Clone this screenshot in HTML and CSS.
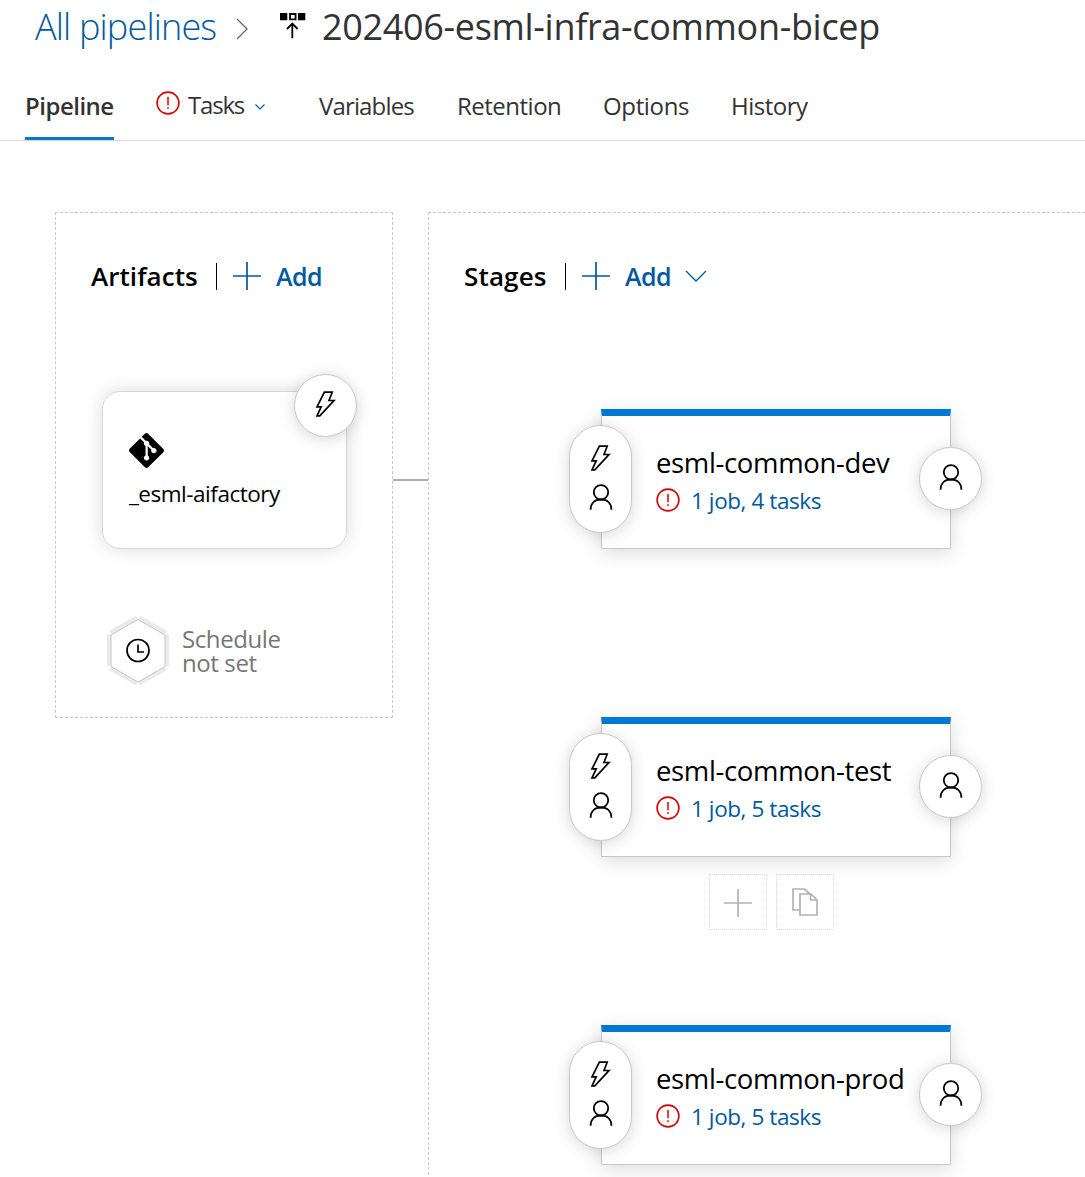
FILE: index.html
```html
<!DOCTYPE html>
<html lang="en">
<head>
<meta charset="utf-8">
<title>202406-esml-infra-common-bicep</title>
<link rel="stylesheet" href="styles.css">
</head>
<body>
<svg class="defs" width="0" height="0">
  <symbol id="alert" viewBox="0 0 24 24"><circle cx="12" cy="12" r="10.9" fill="none" stroke="currentColor" stroke-width="1.6"/><path d="M12 6v8.3M12 16.2v1.8" fill="none" stroke="currentColor" stroke-width="1.5"/></symbol>
  <symbol id="bolt" viewBox="0 0 21 26"><path d="M9.4 1.2H17.2L14 9.500H19L4.800 24.800H2L6.200 15.800H2Z" fill="none" stroke="currentColor" stroke-width="1.7"/></symbol>
  <symbol id="person" viewBox="0 0 24 26"><circle cx="12" cy="8.3" r="7.2" fill="none" stroke="currentColor" stroke-width="1.8"/><path d="M1.600 25.700C1.600 19 6 15.500 12 15.500S22.400 19 22.400 25.700" fill="none" stroke="currentColor" stroke-width="1.8"/></symbol>
  <symbol id="plus" viewBox="0 0 28 28"><path d="M14 0v28M0 14h28" fill="none" stroke="currentColor" stroke-width="1.7"/></symbol>
</svg>
<header class="header">
  <div class="crumbs">
    <a class="crumb-link">All pipelines</a>
    <svg class="crumb-arrow" viewBox="0 0 12 22"><path d="M1 1L11 11L1 21" fill="none" stroke="#666" stroke-width="1.3"/></svg>
    <svg class="release-icon" viewBox="0 0 26 26"><path d="M0 0H7.300V7.300H0ZM18 0H25.300V7.300H18Z"/><path d="M10 1H15.600V6.400H10ZM12.300 25.300V10.500M7 16L12.300 10.600L17.600 16" fill="none" stroke="#000" stroke-width="1.8"/></svg>
    <h1 class="title">202406-esml-infra-common-bicep</h1>
  </div>
  <nav class="tabs">
    <a class="tab tab-pipeline">Pipeline</a>
    <a class="tab tab-tasks"><svg class="alert"><use href="#alert"/></svg><span>Tasks</span><svg class="caret" viewBox="0 0 10 6"><path d="M.5 .5L5 5L9.500 .5" fill="none" stroke="#005a9e" stroke-width="1.1"/></svg></a>
    <a class="tab tab-variables">Variables</a>
    <a class="tab tab-retention">Retention</a>
    <a class="tab tab-options">Options</a>
    <a class="tab tab-history">History</a>
  </nav>
</header>
<main class="canvas">
  <section class="panel artifacts">
    <div class="panel-head">
      <h2 class="h-artifacts">Artifacts</h2><i class="sep"></i>
      <svg class="plus"><use href="#plus"/></svg><span class="add">Add</span>
    </div>
    <div class="artifact">
      <svg class="git" viewBox="0 0 24 24"><path d="M23.546 10.93L13.067.452c-.604-.603-1.582-.603-2.188 0L8.708 2.627l2.76 2.76c.645-.215 1.379-.07 1.889.441.516.515.658 1.258.438 1.9l2.658 2.66c.645-.223 1.387-.078 1.9.435.721.72.721 1.884 0 2.604-.719.719-1.881.719-2.6 0-.539-.541-.674-1.337-.404-1.996L12.86 8.955v6.525c.176.086.342.203.488.348.713.721.713 1.883 0 2.6-.719.721-1.889.721-2.609 0-.719-.719-.719-1.879 0-2.598.182-.18.387-.316.605-.406V8.835c-.217-.091-.424-.222-.6-.401-.545-.545-.676-1.342-.396-2.009L7.636 3.7.45 10.881c-.6.605-.6 1.584 0 2.189l10.48 10.477c.604.604 1.582.604 2.186 0l10.43-10.43c.605-.603.605-1.582 0-2.187"/></svg>
      <span class="artifact-name">_esml-aifactory</span>
      <div class="round trigger"><svg class="bolt"><use href="#bolt"/></svg></div>
    </div>
    <div class="schedule">
      <svg class="hex" viewBox="0 0 62 70">
        <path d="M2 18.500V50M60 18.500V50M3.300 16.500L29.700 1.500M32.300 1.500L58.700 16.500M3.300 52.500L29.700 67.500M32.300 67.500L58.700 52.500" stroke="#eaeaea" stroke-width="4"/>
        <path d="M31 3.500L58 19V50.500L31 66L4 50.500V19Z" fill="#fff" stroke="#c4c4c4"/>
        <circle cx="31" cy="34.500" r="11" fill="none" stroke="#000" stroke-width="1.700"/><path d="M31 28.500V36H37" fill="none" stroke="#000" stroke-width="1.700"/>
      </svg>
      <p class="schedule-text">Schedule<br>not set</p>
    </div>
  </section>
  <div class="connector"></div>
  <section class="panel stages">
    <div class="panel-head">
      <h2 class="h-stages">Stages</h2><i class="sep"></i>
      <svg class="plus"><use href="#plus"/></svg><span class="add">Add</span>
      <svg class="add-caret" viewBox="0 0 22 12"><path d="M1 1L11 11L21 1" fill="none" stroke="#005a9e" stroke-width="1.300"/></svg>
    </div>
    <div class="stage-list">
      <article class="stage">
        <h3>esml-common-dev</h3>
        <div class="jobs"><svg class="alert"><use href="#alert"/></svg><a>1 job, 4 tasks</a></div>
        <div class="pill"><svg class="bolt"><use href="#bolt"/></svg><svg class="person"><use href="#person"/></svg></div>
        <div class="round post"><svg class="person"><use href="#person"/></svg></div>
      </article>
      <article class="stage">
        <h3>esml-common-test</h3>
        <div class="jobs"><svg class="alert"><use href="#alert"/></svg><a>1 job, 5 tasks</a></div>
        <div class="pill"><svg class="bolt"><use href="#bolt"/></svg><svg class="person"><use href="#person"/></svg></div>
        <div class="round post"><svg class="person"><use href="#person"/></svg></div>
        <div class="actions">
          <div class="action"><svg class="plus"><use href="#plus"/></svg></div>
          <div class="action"><svg class="copy" viewBox="0 0 26 28"><path d="M8 22H1V1H12.500L18 6M8 6H19L25 12V27H8ZM18.500 6V12H25" fill="none" stroke="currentColor" stroke-width="1.700"/></svg></div>
        </div>
      </article>
      <article class="stage">
        <h3>esml-common-prod</h3>
        <div class="jobs"><svg class="alert"><use href="#alert"/></svg><a>1 job, 5 tasks</a></div>
        <div class="pill"><svg class="bolt"><use href="#bolt"/></svg><svg class="person"><use href="#person"/></svg></div>
        <div class="round post"><svg class="person"><use href="#person"/></svg></div>
      </article>
    </div>
  </section>
</main>
</body>
</html>
```
FILE: styles.css
```css
* { box-sizing: border-box; }
body {
  margin: 0;
  height: 1177px;
  overflow: hidden;
  background: #fff;
  color: #000;
  font-family: "Open Sans", "Noto Sans", sans-serif;
  white-space: nowrap;
}
h1, h2, h3, p { margin: 0; font-weight: 400; }
svg { display: block; flex: none; }
.defs { position: absolute; }

.header { height: 141px; border-bottom: 1px solid #d6d6d6; color: #333; }
.crumbs { display: flex; height: 84px; padding-left: 35px; }
.crumb-link { width: 201px; font-size: 36px; font-weight: 300; line-height: 54px; letter-spacing: -.83px; color: #005a9e; }
.crumb-arrow { width: 12px; height: 22px; margin-top: 18px; }
.release-icon { width: 26px; height: 26px; margin: 13px 0 0 32px; }
.title { margin-left: 16px; font-size: 36px; line-height: 54px; letter-spacing: -.32px; }

.tabs { display: flex; height: 56px; padding-left: 25px; font-size: 24px; line-height: 44px; }
.tab { height: 56px; }
.tab-pipeline { width: 89px; border-bottom: 3px solid #0078d4; font-weight: 600; letter-spacing: -.5px; }
.tab-tasks { display: flex; width: 204px; padding-left: 42px; line-height: 42px; letter-spacing: -1.2px; }
.tab-tasks .alert { margin: 7px 8px 0 0; }
.tab-tasks span { width: 67px; }
.caret { width: 10px; height: 6px; margin-top: 20px; }
.tab-variables { width: 139px; padding-left: 1px; letter-spacing: -.85px; }
.tab-retention { width: 146px; letter-spacing: -.5px; }
.tab-options { width: 127px; letter-spacing: -.35px; }
.tab-history { padding-left: 1px; letter-spacing: -.5px; }
.alert { width: 24px; height: 24px; color: #d90000; }

.canvas { display: flex; height: 1036px; padding: 71px 0 0 55px; }
.panel { border: 1px dashed #c8c8c8; }
.artifacts { width: 338px; height: 506px; padding: 49px 0 0 35px; }
.connector { width: 35px; height: 2px; margin-top: 267px; background: #adadad; }
.stages { flex: 1; height: 963px; border-right: 0; border-bottom: 0; padding: 49px 0 0 35px; }
.panel-head { display: flex; height: 30px; font-size: 26px; font-weight: 600; line-height: 29px; }
.panel-head h2 { font-size: 26px; font-weight: 600; }
.h-artifacts { width: 125px; letter-spacing: .05px; }
.h-stages { width: 101px; letter-spacing: .15px; }
.sep { width: 1px; height: 27px; margin-top: 1px; background: #000; }
.plus { width: 28px; height: 28px; margin: 0 0 0 16px; }
.panel-head .plus { color: #005a9e; }
.add { width: 60px; margin-left: 15px; color: #005a9e; font-size: 25px; letter-spacing: -.5px; }
.add-caret { width: 22px; height: 12px; margin-top: 8px; }

.artifact {
  position: relative;
  width: 245px;
  height: 158px;
  margin: 99px 0 0 11px;
  padding: 41px 0 0 26px;
  border: 1px solid #d6d6d6;
  border-radius: 18px;
  box-shadow: 0 0 18px rgba(0, 0, 0, .14);
}
.git { width: 35px; height: 35px; }
.artifact-name { display: block; margin-top: 9px; font-size: 22.500px; line-height: 34px; letter-spacing: -.48px; }
.round, .pill {
  position: absolute;
  display: flex;
  align-items: center;
  width: 63px;
  border: 1px solid #c8c8c8;
  border-radius: 32px;
  background: #fff;
  box-shadow: 0 2px 16px rgba(0, 0, 0, .16);
}
.round { height: 63px; justify-content: center; }
.trigger { left: 191px; top: -18px; }
.bolt { width: 21px; height: 26px; }
.person { width: 24px; height: 26px; }
.trigger .bolt { margin-bottom: 3px; }

.schedule { display: flex; margin: 67px 0 0 16px; }
.hex { width: 62px; height: 70px; }
.schedule-text { margin: 11px 0 0 13px; color: #767676; font-size: 24px; line-height: 24px; letter-spacing: -.4px; }

.stage-list { display: flex; flex-direction: column; gap: 168px; margin: 117px 0 0 137px; }
.stage {
  position: relative;
  width: 350px;
  height: 140px;
  padding: 28px 0 0 54px;
  border: 1px solid #c8c8c8;
  border-top: 7px solid #0078d4;
  box-shadow: 0 4px 18px rgba(0, 0, 0, .14);
}
.stage h3 { height: 38px; font-size: 27.500px; line-height: 37px; letter-spacing: -.35px; }
.jobs { display: flex; height: 36px; color: #005a9e; font-size: 22.500px; line-height: 38px; letter-spacing: -.42px; }
.jobs .alert { margin: 6px 12px 0 0; }
.jobs a { margin-left: -1px; }
.pill { left: -33px; top: 9px; height: 108px; flex-direction: column; gap: 13px; padding-top: 19px; }
.post { left: 317px; top: 31px; }
.post .person { margin-bottom: 3px; }
.actions { position: absolute; left: 107px; top: 150px; display: flex; gap: 9px; }
.action { display: flex; width: 58px; height: 56px; align-items: center; justify-content: center; border: 1px dotted #dcdcdc; color: #b2b2b2; }
.action .plus { margin: 1px 0 0; }
.copy { width: 26px; height: 28px; }
```
